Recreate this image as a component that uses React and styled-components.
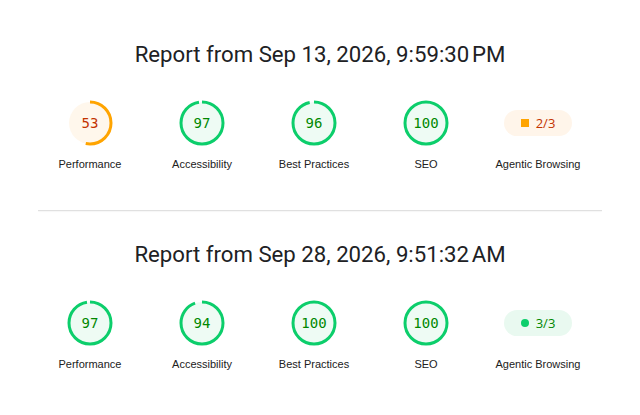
import React from "react";
import styled, { createGlobalStyle } from "styled-components";

const GlobalStyle = createGlobalStyle`
  body {
    margin: 0;
    background: #ffffff;
    font-family: "Liberation Sans", Arial, sans-serif;
  }
`;

const Page = styled.div`
  width: 640px;
  padding-top: 35px;
`;

const Section = styled.div`
  display: flex;
  flex-direction: column;
  align-items: center;
`;

const Title = styled.h2`
  margin: 0;
  font-family: Roboto, "Noto Sans", sans-serif;
  font-weight: 400;
  font-size: 22.2px;
  line-height: 38px;
  color: #202124;
`;

const Row = styled.div`
  display: grid;
  grid-template-columns: repeat(5, 112px);
  margin: 27px 12px 0 0;
`;

const Item = styled.div`
  display: flex;
  flex-direction: column;
  align-items: center;
`;

const GaugeBox = styled.div`
  position: relative;
  width: 46px;
  height: 46px;
  display: flex;
  align-items: center;
  justify-content: center;
`;

const GaugeSvg = styled.svg`
  position: absolute;
  inset: 0;
`;

const Score = styled.span`
  position: relative;
  font-family: "DejaVu Sans Mono", "Liberation Mono", monospace;
  font-size: 14px;
  color: ${(p) => p.$color};
`;

const Label = styled.div`
  margin-top: 12px;
  font-size: 11px;
  color: #212121;
`;

const PillWrap = styled.div`
  height: 46px;
  display: flex;
  align-items: center;
`;

const Pill = styled.div`
  display: flex;
  align-items: center;
  justify-content: center;
  gap: 7px;
  width: 68px;
  height: 26px;
  border-radius: 13px;
  background: ${(p) => p.$bg};
  font-family: "Open Sans", sans-serif;
  font-size: 13px;
  color: ${(p) => p.$color};
`;

const Marker = styled.span`
  width: 8px;
  height: 8px;
  background: ${(p) => p.$color};
  border-radius: ${(p) => (p.$round ? "50%" : "0")};
`;

const Divider = styled.hr`
  margin: 40px 38px 24px 38px;
  border: none;
  border-top: 1px solid #e0e0e0;
  box-shadow: 0 1px 1px rgba(0, 0, 0, 0.04);
`;

const tone = (s) =>
  s >= 90
    ? { arc: "#0cce6b", fill: "#eefbf4", text: "#008800" }
    : { arc: "#ffa400", fill: "#fff7ec", text: "#c33300" };

function Gauge({ score, label }) {
  const t = tone(score);
  const r = 21;
  const c = 2 * Math.PI * r;
  return (
    <Item>
      <GaugeBox>
        <GaugeSvg width="46" height="46" viewBox="0 0 46 46">
          <circle cx="23" cy="23" r={r} fill={t.fill} />
          <circle
            cx="23"
            cy="23"
            r={r}
            fill="none"
            stroke={t.arc}
            strokeWidth="3"
            strokeDasharray={`${(c * score) / 100} ${c}`}
            transform="rotate(-90 23 23)"
          />
        </GaugeSvg>
        <Score $color={t.text}>{score}</Score>
      </GaugeBox>
      <Label>{label}</Label>
    </Item>
  );
}

function Fraction({ value, total }) {
  const pass = value === total;
  return (
    <Item>
      <PillWrap>
        <Pill $bg={pass ? "#e9f9f0" : "#fff5ea"} $color={pass ? "#008800" : "#c33300"}>
          <Marker $color={pass ? "#0cce6b" : "#ffa400"} $round={pass} />
          {value}/{total}
        </Pill>
      </PillWrap>
      <Label>Agentic Browsing</Label>
    </Item>
  );
}

const reports = [
  { date: "Sep 13, 2026, 9:59:30\u202FPM", scores: [53, 97, 96, 100], frac: [2, 3] },
  { date: "Sep 28, 2026, 9:51:32\u202FAM", scores: [97, 94, 100, 100], frac: [3, 3] },
];

const labels = ["Performance", "Accessibility", "Best Practices", "SEO"];

export default function App() {
  return (
    <Page>
      <GlobalStyle />
      {reports.map((r, i) => (
        <React.Fragment key={r.date}>
          {i > 0 && <Divider />}
          <Section>
            <Title>Report from {r.date}</Title>
            <Row>
              {r.scores.map((s, j) => (
                <Gauge key={labels[j]} score={s} label={labels[j]} />
              ))}
              <Fraction value={r.frac[0]} total={r.frac[1]} />
            </Row>
          </Section>
        </React.Fragment>
      ))}
    </Page>
  );
}
